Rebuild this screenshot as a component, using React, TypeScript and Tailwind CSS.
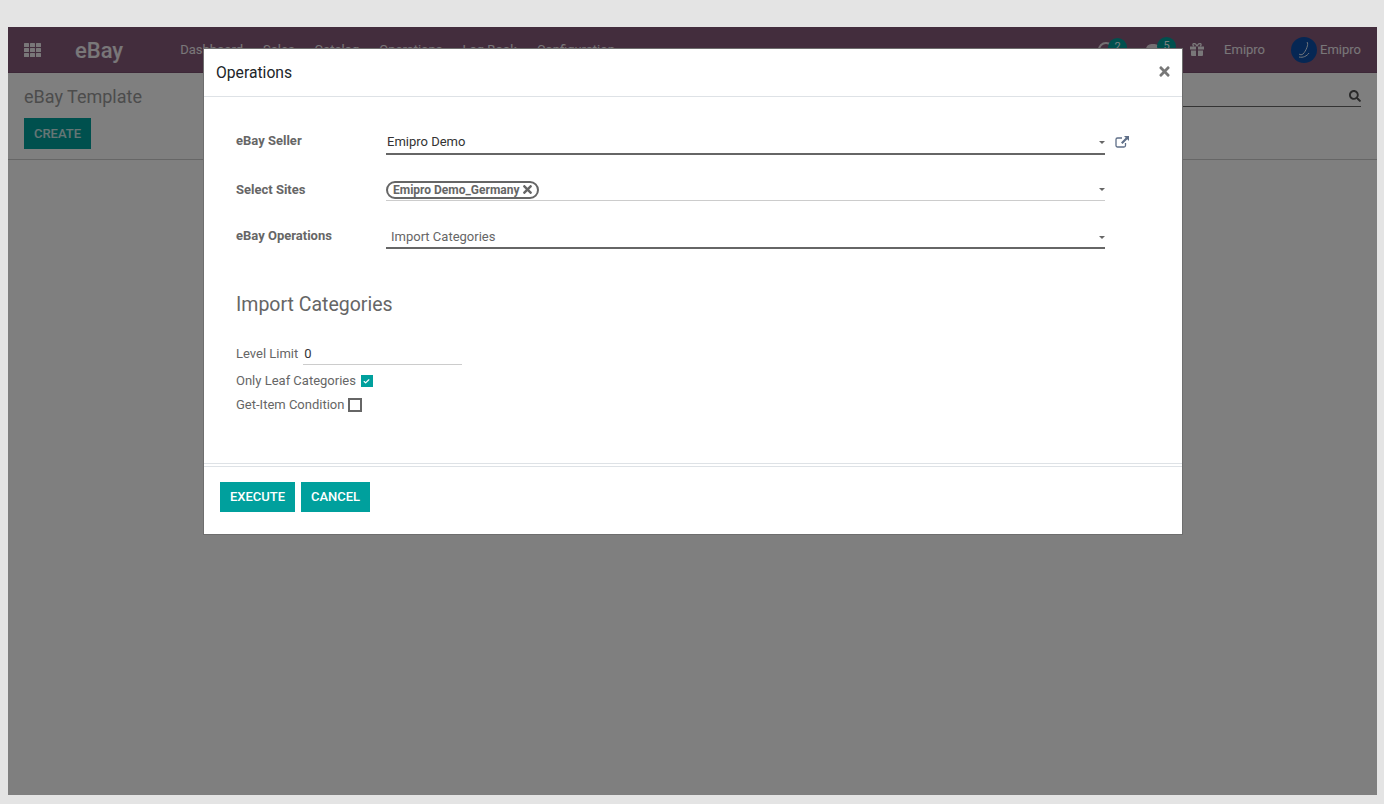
import React from 'react';
import { Check } from 'lucide-react';
import { FaSearch, FaTimes } from 'react-icons/fa';

const NAV_ITEMS = ['Dashboard', 'Sales', 'Catalog', 'Operations', 'Log Book', 'Configuration'];

const Caret = () => (
  <svg width="6" height="3" viewBox="0 0 6 3" className="shrink-0 text-[#666]">
    <path d="M0 0h6L3 3z" fill="currentColor" />
  </svg>
);

const AppsIcon = () => (
  <svg width="18" height="14" viewBox="0 0 18 14" fill="currentColor">
    {[0, 5, 10].map((y) =>
      [0, 6, 12].map((x) => <rect key={`${x}-${y}`} x={x} y={y} width="5" height="4" rx="0.5" />)
    )}
  </svg>
);

const GiftIcon = () => (
  <svg width="14" height="13" viewBox="0 0 14 13" fill="currentColor" className="mr-[20px]">
    <path d="M0 3.5h6v3H0zM8 3.5h6v3H8zM1 7.5h5V13H2a1 1 0 0 1-1-1zM8 7.5h5V12a1 1 0 0 1-1 1H8z" />
    <path
      d="M7 3.2C6 1 4.5.3 3.6.6 2.6 1 2.7 2.6 4 3.2M7 3.2C8 1 9.5.3 10.4.6c1 .4.9 2-.4 2.6"
      fill="none"
      stroke="currentColor"
      strokeWidth="1.3"
    />
  </svg>
);

const LinkIcon = () => (
  <svg width="14" height="12" viewBox="0 0 14 12" className="ml-[10px] mt-[5px] text-[#5f6f88]">
    <path
      d="M10.5 7v2.500A1.500 1.500 0 0 1 9 11H2.500A1.500 1.500 0 0 1 1 9.500V3.500A1.500 1.500 0 0 1 2.500 2H7"
      fill="none"
      stroke="currentColor"
      strokeWidth="1.300"
    />
    <path d="M9 0h5v5l-1.700-1.700L7.500 8 6 6.500l4.700-4.800z" fill="currentColor" />
  </svg>
);

const Navbar = () => (
  <header className="flex h-[46px] shrink-0 items-center border-b border-[#7a5170] bg-[#875a7b] text-white/90">
    <span className="ml-[16px] flex w-[18px]">
      <AppsIcon />
    </span>
    <span className="ml-[33px] mt-[2px] text-[22px] font-medium leading-none">eBay</span>
    <nav className="ml-[57px] mt-[1px] flex gap-[20px] text-[13px]">
      {NAV_ITEMS.map((item) => (
        <span key={item}>{item}</span>
      ))}
    </nav>
    <div className="ml-auto mr-[16px] flex items-center text-[13px]">
      <span className="relative mr-[32px] h-[16px] w-[16px] rounded-full border-2 border-white/80">
        <span className="absolute left-[8px] top-[-6px] flex h-[19px] w-[19px] items-center justify-center rounded-full bg-[#00a09d] text-[11px] text-white">
          2
        </span>
      </span>
      <span className="relative mr-[30px] h-[11px] w-[14px] rounded-full bg-white/80">
        <span className="absolute left-[11px] top-[-7px] flex h-[19px] w-[19px] items-center justify-center rounded-full bg-[#00a09d] text-[11px] text-white">
          5
        </span>
      </span>
      <GiftIcon />
      <span className="mr-[26px] mt-[1px]">Emipro</span>
      <svg width="26" height="26" viewBox="0 0 26 26" className="mr-[3px]">
        <circle cx="13" cy="13" r="13" fill="#0c4fa8" />
        <path
          d="M16 5c2 2-1 9-4 12-1 1-3 1-4 0M8 20c4 1 8-1 10-4"
          stroke="#dfe9f7"
          strokeWidth="1"
          fill="none"
        />
      </svg>
      <span className="mt-[1px]">Emipro</span>
    </div>
  </header>
);

const ControlPanel = () => (
  <section className="flex h-[87px] justify-between border-b border-[#cccccc] bg-white pl-[16px] pr-[16px]">
    <div>
      <h1 className="mt-[13px] text-[18px] leading-[21px] text-[#999]">eBay Template</h1>
      <button className="mt-[11px] h-[31px] w-[67px] bg-[#00a09d] text-[13px] font-medium text-white/80">CREATE</button>
    </div>
    <div className="mt-[12px] flex h-[22px] w-[400px] items-center justify-end border-b border-[#666]">
      <FaSearch size={12} className="text-[#555]" />
    </div>
  </section>
);

type FieldRowProps = {
  label: string;
  children: React.ReactNode;
  className: string;
  labelClassName?: string;
};

const FieldRow = ({ label, children, className, labelClassName = '' }: FieldRowProps) => (
  <div className={`flex ${className}`}>
    <label className={`w-[150px] shrink-0 text-[13px] font-bold leading-[20px] text-[#666] ${labelClassName}`}>{label}</label>
    {children}
  </div>
);

const Dialog = () => (
  <div className="absolute left-[195px] top-[21px] flex h-[487px] w-[980px] flex-col border border-[#6e6e6e] bg-white">
    <div className="flex h-[48px] shrink-0 items-center justify-between border-b border-[#dee2e6] pl-[12px] pr-[10px]">
      <h4 className="text-[15.7px] text-[#212529]">Operations</h4>
      <FaTimes size={15} className="mb-[2px] text-[#777]" />
    </div>

    <div className="flex-1 pl-[32px] pt-[34px]">
      <FieldRow label="eBay Seller" className="h-[24px]">
        <div className="flex h-[24px] w-[719px] items-center justify-between border-b-2 border-[#666] pl-[1px]">
          <span className="text-[13px] text-[#333]">Emipro Demo</span>
          <Caret />
        </div>
        <LinkIcon />
      </FieldRow>

      <FieldRow label="Select Sites" className="mt-[24px] h-[22px]" labelClassName="pt-[1px]">
        <div className="flex h-[22px] w-[719px] items-center justify-between border-b border-[#cccccc]">
          <span className="flex h-[18px] items-center gap-[2px] rounded-full border-2 border-[#666] pl-[5px] pr-[3px] text-[12px] font-bold text-[#666]">
            Emipro Demo_Germany
            <FaTimes size={13} />
          </span>
          <Caret />
        </div>
      </FieldRow>

      <FieldRow label="eBay Operations" className="mt-[24px] h-[24px]" labelClassName="pt-[1px]">
        <div className="flex h-[24px] w-[719px] items-center justify-between border-b-2 border-[#666] pl-[5px] pt-[2px]">
          <span className="text-[13px] text-[#666]">Import Categories</span>
          <Caret />
        </div>
      </FieldRow>

      <h3 className="mt-[44px] text-[19.5px] leading-[24px] text-[#666]">Import Categories</h3>

      <div className="mt-[25px] text-[13px] text-[#666]">
        <div className="flex h-[23px] items-center">
          <span>Level Limit</span>
          <span className="ml-[5px] flex h-[22px] w-[159px] items-center border-b border-[#cccccc] pl-[1px] pt-[1px] text-[#333]">0</span>
        </div>
        <div className="mt-[6px] flex h-[20px] items-center">
          <span>Only Leaf Categories</span>
          <span className="ml-[5px] flex h-[12px] w-[12px] items-center justify-center bg-[#00a09d] text-white">
            <Check size={7} strokeWidth={4} />
          </span>
        </div>
        <div className="mt-[4px] flex h-[20px] items-center">
          <span>Get-Item Condition</span>
          <span className="ml-[4px] h-[14px] w-[14px] border-2 border-[#666] bg-white" />
        </div>
      </div>
    </div>

    <div className="flex h-[71px] shrink-0 gap-[6px] border-t-4 border-double border-[#dee2e6] pl-[16px] pt-[15px]">
      <button className="h-[30px] w-[75px] bg-[#00a09d] text-[13px] font-medium text-white">EXECUTE</button>
      <button className="h-[30px] w-[69px] bg-[#00a09d] text-[13px] font-medium text-white">CANCEL</button>
    </div>
  </div>
);

export default function App() {
  return (
    <div className="h-[804px] w-[1384px] overflow-hidden bg-[#e4e4e4] pb-[9px] pl-[8px] pr-[7px] pt-[27px] font-['Roboto',sans-serif]">
      <div className="relative flex h-full w-full flex-col bg-white">
        <Navbar />
        <ControlPanel />
        <div className="absolute inset-0 bg-black/50" />
        <Dialog />
      </div>
    </div>
  );
}
